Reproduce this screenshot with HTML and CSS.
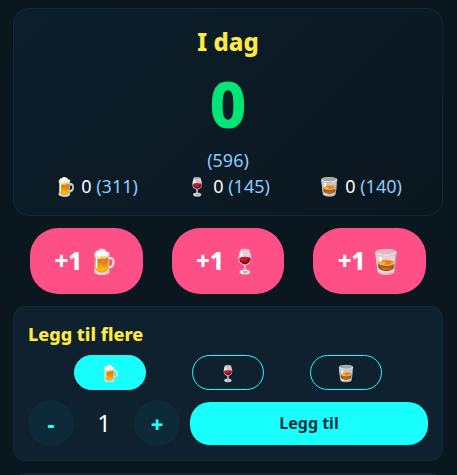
FILE: index.html
```html
<!DOCTYPE html>
<html lang="no">
<head>
    <meta charset="UTF-8">
    <title>I dag</title>
    <meta name="viewport" content="width=device-width, initial-scale=1.0">
    <link rel="stylesheet" href="styles.css">
</head>
<body>
    <main class="wrap">
        <section class="card today">
            <h1>I dag</h1>
            <div class="total">0</div>
            <div class="prev">(596)</div>
            <div class="stats">
                <div>🍺 0 <span class="prev">(311)</span></div>
                <div>🍷 0 <span class="prev">(145)</span></div>
                <div>🥃 0 <span class="prev">(140)</span></div>
            </div>
        </section>
        <div class="quick">
            <button type="button">+1 🍺</button>
            <button type="button">+1 🍷</button>
            <button type="button">+1 🥃</button>
        </div>
        <section class="card more">
            <h2>Legg til flere</h2>
            <div class="types">
                <button type="button" class="type active">🍺</button>
                <button type="button" class="type">🍷</button>
                <button type="button" class="type">🥃</button>
            </div>
            <div class="controls">
                <button type="button" class="step">-</button>
                <span class="count">1</span>
                <button type="button" class="step">+</button>
                <button type="button" class="add">Legg til</button>
            </div>
        </section>
        <section class="card history"></section>
    </main>
</body>
</html>
```

FILE: styles.css
```css
* {
    box-sizing: border-box;
    margin: 0;
    padding: 0;
}
body {
    background: #0b171f;
    font-family: "Noto Sans", "Noto Color Emoji", sans-serif;
    font-size: 18px;
    line-height: 26px;
    color: #fff;
}
button {
    font-family: inherit;
    border: none;
    cursor: pointer;
}
h1,h2,.total,.quick button,.step {
    font-weight: 850;
}
.wrap {
    display: flex;
    flex-direction: column;
    gap: 12px;
    height: 100vh;
    padding: 8px 14px 0 13px;
    overflow: hidden;
}
.card {
    flex-shrink: 0;
    background: #0f212e;
    border: 1px solid #0c2a38;
    border-radius: 12px;
}

/* today */
.today {
    padding: 16px;
    text-align: center;
    background: linear-gradient(135deg, #0c1e2b, #0b171f);
    border-radius: 16px;
}
.today h1 {
    font-size: 24px;
    line-height: 34px;
    color: #ffeb3b;
}
.total {
    padding-top: 2px;
    font-size: 64px;
    line-height: 86px;
    color: #00e676;
}
.prev {
    color: #90caf9;
}
.stats {
    display: grid;
    grid-template-columns: repeat(3, 1fr);
}

/* +1 buttons */
.quick {
    display: grid;
    grid-template-columns: repeat(3, 1fr);
    gap: 29px;
    padding: 0 17px;
}
.quick button {
    height: 66px;
    padding-bottom: 2px;
    font-size: 24px;
    color: #fff;
    background: #ff4f87;
    border-radius: 28px;
}

/* add more */
.more {
    padding: 14px;
}
.more h2 {
    margin-bottom: 8px;
    font-size: 18px;
    line-height: 26px;
    color: #ffeb3b;
}
.types {
    display: flex;
    justify-content: space-evenly;
    margin-bottom: 10px;
}
.type {
    width: 72px;
    height: 35px;
    font-size: 16px;
    background: none;
    border: 1px solid #18ffff;
    border-radius: 18px;
}
.type.active {
    background: #18ffff;
}
.controls {
    display: flex;
    align-items: center;
    gap: 10px;
}
.step {
    width: 46px;
    height: 46px;
    font-size: 22px;
    color: #18ffff;
    background: #0c2a38;
    border-radius: 50%;
}
.count {
    width: 40px;
    font-size: 24px;
    text-align: center;
}
.add {
    flex: 1;
    height: 43px;
    font-size: 16px;
    font-weight: 700;
    color: #06303a;
    background: #18ffff;
    border-radius: 20px;
}

.history {
    height: 60px;
}
```
